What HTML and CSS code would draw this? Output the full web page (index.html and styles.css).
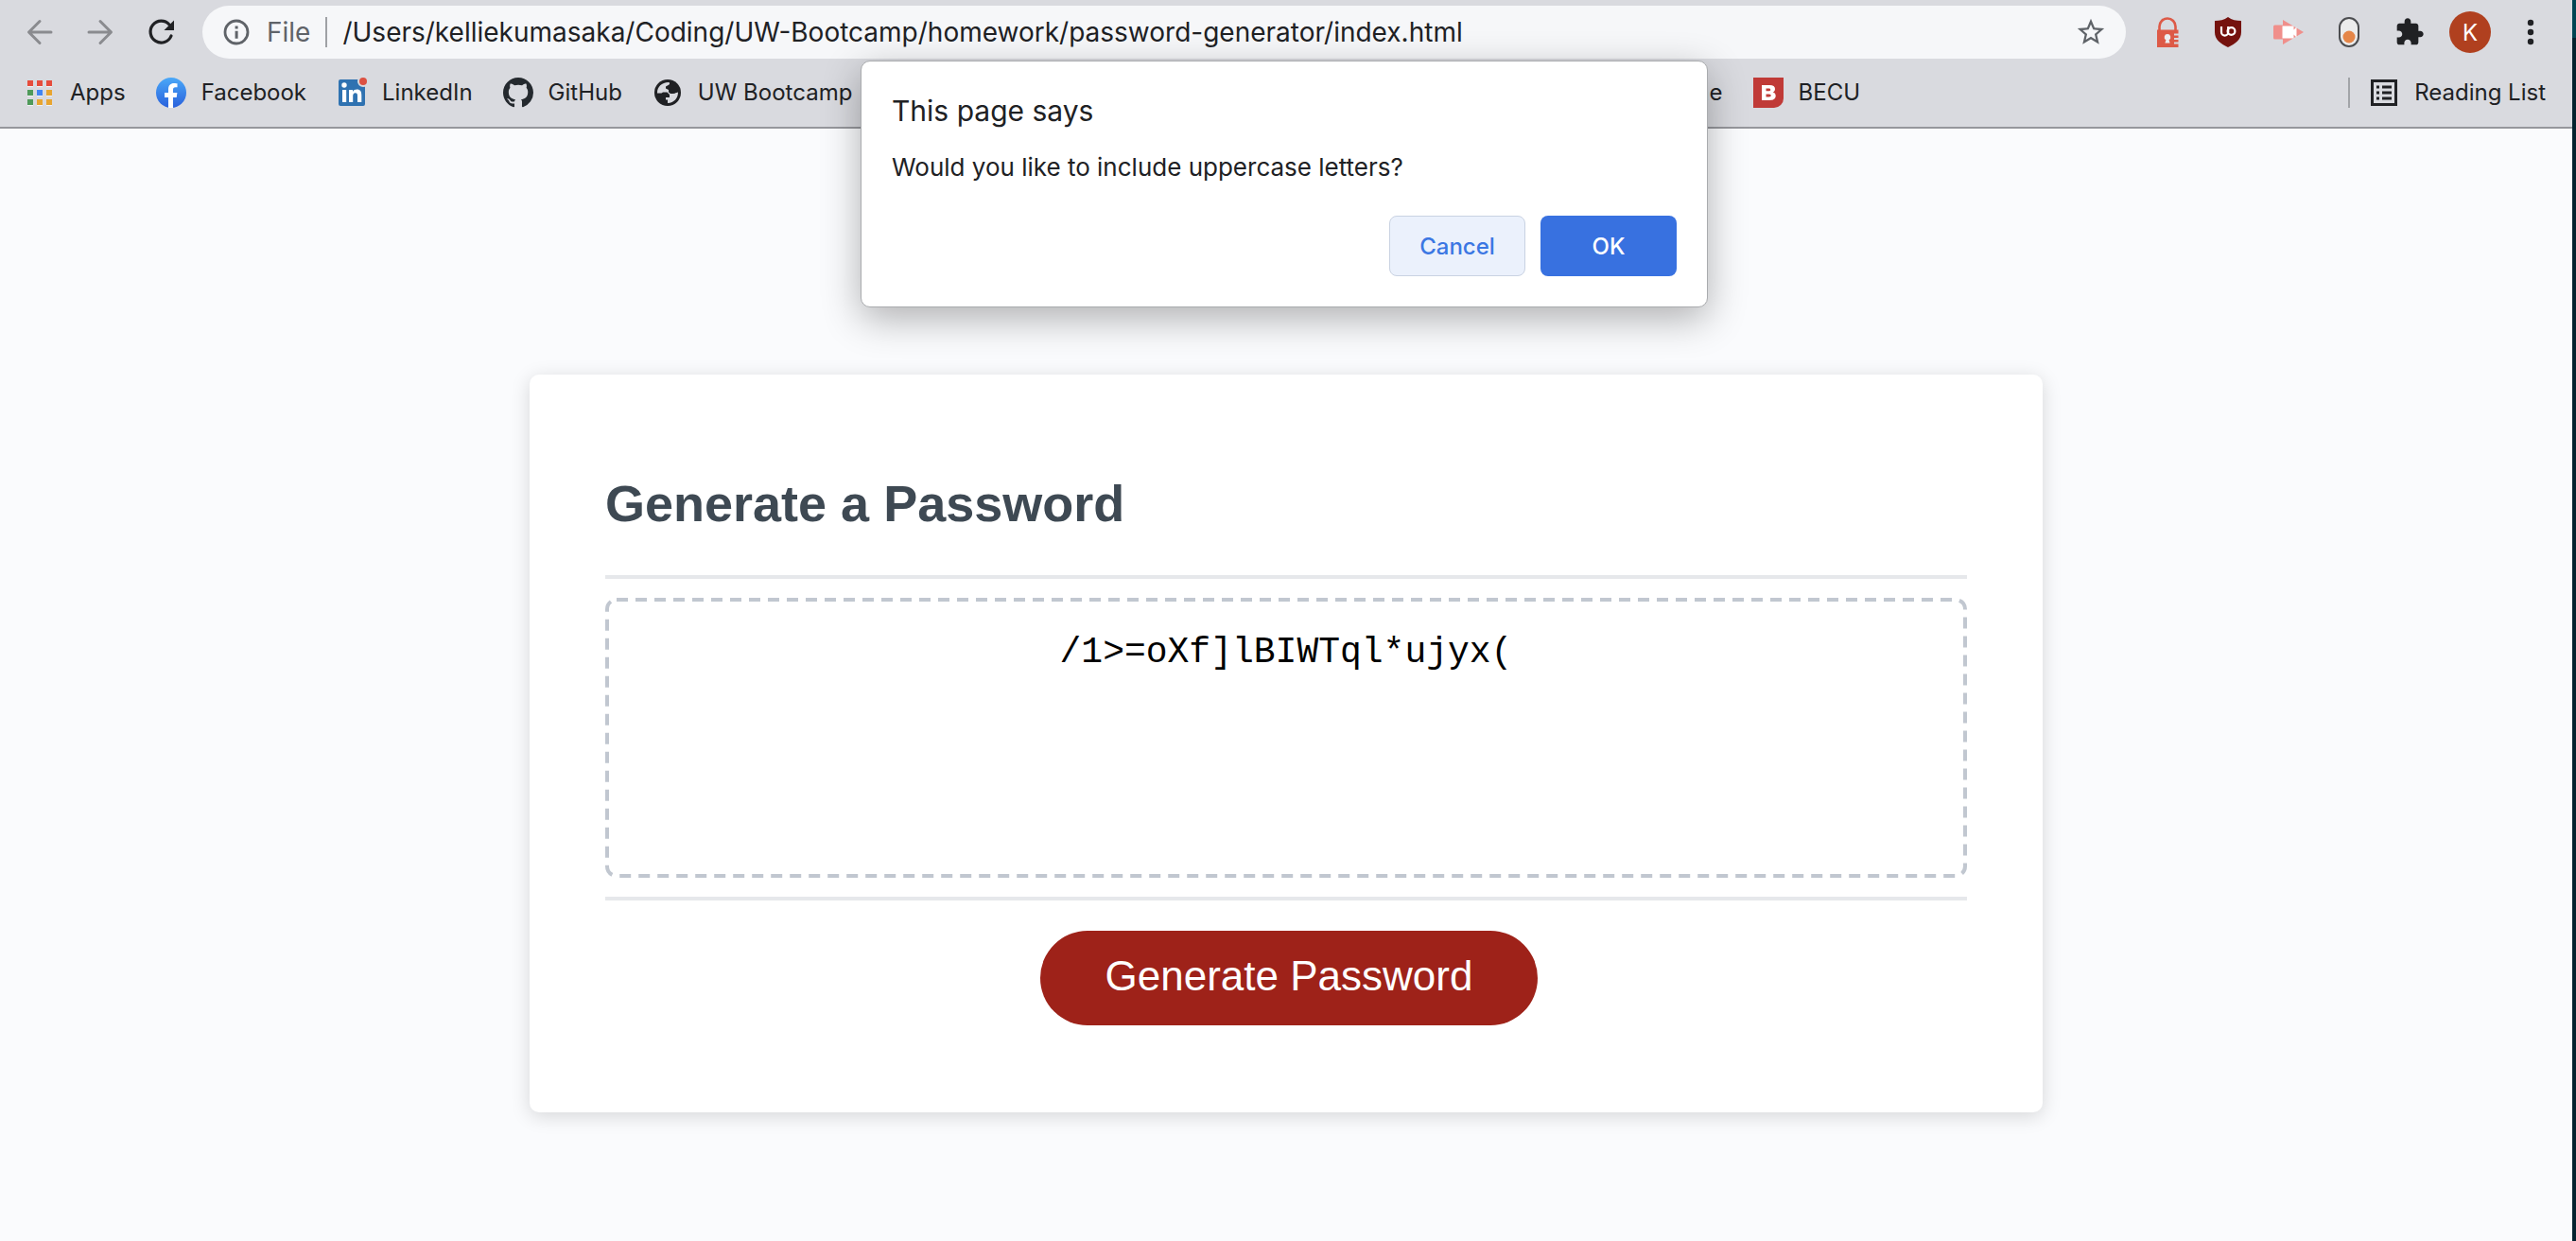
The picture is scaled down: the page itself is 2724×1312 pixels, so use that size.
FILE: index.html
```html
<!DOCTYPE html>
<html lang="en">
<head>
<meta charset="utf-8">
<title>Password Generator</title>
<link rel="stylesheet" href="styles.css">
</head>
<body>
<div class="window">
  <header class="browser">
    <div class="toolbar">
      <button class="tool tool-back" aria-label="Back"><svg width="32" height="32" viewBox="0 0 32 32" fill="none" stroke="#8a8b8f" stroke-width="3" stroke-linecap="round" stroke-linejoin="round"><path d="M28 16H5M16 4.500L4.500 16 16 27.500"/></svg></button>
      <button class="tool tool-forward" aria-label="Forward"><svg width="32" height="32" viewBox="0 0 32 32" fill="none" stroke="#8a8b8f" stroke-width="3" stroke-linecap="round" stroke-linejoin="round"><path d="M4 16h23M16 4.500L27.500 16 16 27.500"/></svg></button>
      <button class="tool tool-reload" aria-label="Reload"><svg width="32" height="32" viewBox="0 0 32 32"><path d="M27 20A11.400 11.400 0 1 1 25 8" fill="none" stroke="#202124" stroke-width="3.200" stroke-linecap="round"/><path d="M30 3.500V14H19.500z" fill="#202124"/></svg></button>
      <div class="address">
        <svg width="28" height="28" viewBox="0 0 28 28"><circle cx="14" cy="14" r="12" fill="none" stroke="#5f6368" stroke-width="2.800"/><path d="M12.600 7.500h3v3h-3zM12.600 12.800h3v8h-3z" fill="#5f6368"/></svg>
        <span class="scheme">File</span>
        <input class="url" type="text" aria-label="Address" value="/Users/kelliekumasaka/Coding/UW-Bootcamp/homework/password-generator/index.html">
        <button class="tool" aria-label="Bookmark this page"><svg width="34" height="34" viewBox="0 0 24 24" fill="#5f6368"><path d="M22 9.240l-7.190-.62L12 2 9.190 8.630 2 9.240l5.460 4.730L5.820 21 12 17.270 18.180 21l-1.630-7.030L22 9.240zM12 15.400l-3.760 2.270 1-4.280-3.320-2.880 4.380-.38L12 6.100l1.710 4.040 4.380.38-3.320 2.880 1 4.280L12 15.400z"/></svg></button>
      </div>
      <div class="extensions">
        <button class="tool" aria-label="Password manager"><svg width="32" height="32" viewBox="0 0 32 32"><path d="M7.500 14V10a8.500 8.500 0 0 1 17 0v4" fill="none" stroke="#dd5a47" stroke-width="2.600"/><path d="M5 13.500h22.500v4H23v2h4.500v2.500H23v2h4.500v2.500H23v2h4.500v3.500H5z" fill="#dd5a47"/><path d="M16 18a3.300 3.300 0 0 1 1.600 6.200l1 3.300h-5.200l1-3.300A3.300 3.300 0 0 1 16 18z" fill="#eceef0"/></svg></button>
        <button class="tool" aria-label="Ad blocker"><svg width="32" height="32" viewBox="0 0 32 32"><path d="M16 0c4 3 9 4 14 4v12c0 8-6 12-14 16C8 28 2 24 2 16V4c5 0 10-1 14-4z" fill="#75120e"/><path d="M9 10v6a3.600 3.600 0 0 0 7.200 0v-6" fill="none" stroke="#fff" stroke-width="2.200"/><circle cx="19.500" cy="15" r="3.900" fill="none" stroke="#fff" stroke-width="2.200"/></svg></button>
        <button class="tool" aria-label="Screen recorder"><svg width="32" height="32" viewBox="0 0 32 32"><path d="M0 10q0-1.500 1.500-1.500H10V3l22 13L10 29v-5.500H1.500Q0 23.500 0 22z" fill="#f08f8b"/><path d="M9.500 9.500h12v4l3-3v11l-3-3v4h-12z" fill="#fff"/></svg></button>
        <button class="tool" aria-label="Color toggle"><svg width="32" height="32" viewBox="0 0 32 32"><rect x="6" y="1" width="20" height="30" rx="10" fill="#ececec" stroke="#4c4d50" stroke-width="2"/><circle cx="16" cy="21" r="6.500" fill="#e58648"/></svg></button>
        <button class="tool" aria-label="Extensions"><svg width="32" height="32" viewBox="0 0 24 24" fill="#202124"><path d="M20.500 11H19V7c0-1.100-.9-2-2-2h-4V3.500C13 2.120 11.880 1 10.500 1S8 2.120 8 3.500V5H4c-1.100 0-1.990.9-1.990 2v3.800H3.500c1.490 0 2.700 1.210 2.700 2.700s-1.210 2.700-2.700 2.700H2V20c0 1.100.9 2 2 2h3.800v-1.500c0-1.490 1.210-2.700 2.700-2.700s2.700 1.210 2.700 2.700V22H17c1.100 0 2-.9 2-2v-4h1.500c1.380 0 2.500-1.120 2.500-2.500S21.880 11 20.500 11z"/></svg></button>
      </div>
      <button class="avatar" aria-label="Profile">K</button>
      <button class="tool" aria-label="Menu"><svg width="32" height="32" viewBox="0 0 32 32" fill="#202124"><circle cx="16" cy="6" r="3.200"/><circle cx="16" cy="16" r="3.200"/><circle cx="16" cy="26" r="3.200"/></svg></button>
    </div>
    <nav class="bookmarks" aria-label="Bookmarks">
      <a class="bookmark" href="#"><svg width="32" height="32" viewBox="0 0 32 32"><path d="M3 9h6v1H3zM13 9h6v1h-6zM23 9h6v1h-6zM3 19h6v1H3zM13 19h6v1h-6zM23 19h6v1h-6zM3 29h6v1H3zM13 29h6v1h-6zM23 29h6v1h-6z" fill="#f1f2f4"/><path d="M3 3h6v6H3zM13 3h6v6h-6zM23 3h6v6h-6z" fill="#e64c3c"/><path d="M3 13h6v6H3zM3 23h6v6H3z" fill="#4f9a5a"/><path d="M13 13h6v6h-6z" fill="#4285f4"/><path d="M23 13h6v6h-6zM13 23h6v6h-6zM23 23h6v6h-6z" fill="#e8a531"/></svg>Apps</a>
      <a class="bookmark" href="#"><svg width="32" height="32" viewBox="0 0 32 32"><defs><linearGradient id="fb" x1="0" y1="0" x2="0" y2="1"><stop offset="0" stop-color="#4aa8f8"/><stop offset="1" stop-color="#2a61dc"/></linearGradient></defs><circle cx="16" cy="16" r="16" fill="url(#fb)"/><path d="M13 32V21H9v-5h4v-3.500C13 8.300 15.300 6 19 6c1.800 0 3.500.3 3.500.3v4h-2c-2 0-2.500 1.200-2.500 2.400V16h4.400l-.7 5H18v11z" fill="#fff"/></svg>Facebook</a>
      <a class="bookmark" href="#"><svg width="32" height="32" viewBox="0 0 32 32"><rect x="2" y="2" width="28" height="28" rx="2" fill="#2f72b1"/><circle cx="8" cy="8" r="2.700" fill="#fff"/><path d="M6 13h4.200v13H6zM13 13h4v2c1-1.600 2.500-2.400 4.300-2.400 4 0 5 2.500 5 6.200V26H22v-6.500c0-2-.5-3.200-2.200-3.200-1.900 0-2.600 1.400-2.600 3.200V26H13z" fill="#fff"/><circle cx="28" cy="4" r="6" fill="#d9dadf"/><circle cx="28" cy="4" r="4" fill="#dc5142"/></svg>LinkedIn</a>
      <a class="bookmark" href="#"><svg width="32" height="32" viewBox="0 0 16 16" fill="#24292e"><path d="M8 0C3.580 0 0 3.580 0 8c0 3.540 2.290 6.530 5.470 7.590.4.070.55-.17.55-.38 0-.19-.01-.82-.01-1.490-2.010.37-2.530-.49-2.690-.94-.09-.23-.48-.94-.82-1.130-.28-.15-.68-.52-.01-.53.63-.01 1.080.58 1.230.82.72 1.210 1.870.87 2.330.66.070-.52.28-.87.51-1.070-1.780-.2-3.640-.89-3.640-3.950 0-.87.31-1.590.82-2.150-.08-.2-.36-1.020.08-2.120 0 0 .67-.21 2.200.82.64-.18 1.320-.27 2-.27s1.360.09 2 .27c1.530-1.040 2.200-.82 2.200-.82.44 1.100.16 1.920.08 2.120.51.56.82 1.270.82 2.150 0 3.070-1.870 3.750-3.650 3.950.29.25.54.73.54 1.480 0 1.070-.01 1.930-.01 2.200 0 .21.15.46.55.38A8.010 8.010 0 0 0 16 8c0-4.420-3.580-8-8-8z"/></svg>GitHub</a>
      <a class="bookmark" href="#"><svg width="32" height="32" viewBox="0 0 32 32"><circle cx="16" cy="16" r="14" fill="#202124"/><path d="M5 16C5 10 9.500 5 17 5c1.200 0 1.500 1.500.5 2.500L14 9.500v2l3 1.500v2.500l2 1.500h3l5-1.500C27 22 23 26.500 16 27v-3.500h-2V21h4v-3l-2.500-2.500H11l-1.500 1H5z" fill="#d9dadf"/><path d="M16.500 9.500l3-3 4 1 3 6-3 3-4-.5-1-3z" fill="#202124"/></svg>UW Bootcamp</a>
      <a class="bookmark bookmark-covered" href="#">ne</a>
      <a class="bookmark" href="#"><svg width="32" height="32" viewBox="0 0 32 32"><path d="M0 0h32v22a10 10 0 0 1-10 10H0z" fill="#c03a37"/><path fill-rule="evenodd" d="M9 8h8.500c3.500 0 5.500 1.500 5.500 4 0 1.700-.9 2.900-2.300 3.500 1.900.5 3 1.900 3 3.800 0 3-2.300 4.700-6 4.700H9zm4.500 3.500v2.800h3c2.400 0 2.400-2.800 0-2.800zm0 6v3h3.300c2.600 0 2.600-3 0-3z" fill="#fff"/></svg>BECU</a>
      <a class="bookmark reading-list" href="#"><svg width="32" height="32" viewBox="0 0 32 32" fill="#202124"><path d="M2 2h28v28H2zm3 3v22h22V5z" fill-rule="evenodd"/><path d="M8 8.500h3v3H8zM14 8.500h10v3H14zM8 14.500h3v3H8zM14 14.500h10v3H14zM8 20.500h3v3H8zM14 20.500h10v3H14z"/></svg>Reading List</a>
    </nav>
  </header>

  <main class="page">
    <section class="card">
      <h1 class="card-title">Generate a Password</h1>
      <div class="card-body">
        <div class="password-frame">
          <svg class="dashes" aria-hidden="true"><rect x="2" y="2" rx="10"/></svg>
          <textarea class="password" readonly aria-label="Your secure password">/1&gt;=oXf]lBIWTql*ujyx(</textarea>
        </div>
      </div>
      <div class="card-footer">
        <button class="generate">Generate Password</button>
      </div>
    </section>
  </main>

  <dialog class="prompt" open aria-labelledby="prompt-title">
    <h2 class="prompt-title" id="prompt-title">This page says</h2>
    <p class="prompt-text">Would you like to include uppercase letters?</p>
    <div class="prompt-actions">
      <button class="prompt-button prompt-cancel">Cancel</button>
      <button class="prompt-button prompt-ok">OK</button>
    </div>
  </dialog>
</div>
</body>
</html>
```
FILE: styles.css
```css
*, *::before, *::after {
  box-sizing: border-box;
}

body {
  margin: 0;
  padding-right: 4px;
  background: linear-gradient(#004452 40px, #04222e 40px);
  font-family: Inter, "Liberation Sans", sans-serif;
  color: #202124;
}

button {
  border: 0;
  padding: 0;
  background: none;
  font-family: inherit;
}

svg {
  display: block;
  flex: none;
}

.window {
  position: relative;
  display: flex;
  flex-direction: column;
  min-height: 100vh;
  background: #fafbfd;
}

/* Browser chrome */

.browser {
  background: #d9dadf;
  border-bottom: 2px solid #96979c;
}

.toolbar {
  display: flex;
  align-items: center;
  height: 68px;
  padding: 0 28px 0 26px;
}

.tool-back,
.tool-forward {
  margin-right: 32px;
}

.tool-reload {
  margin-right: 28px;
}

.address {
  flex: 1;
  display: flex;
  align-items: center;
  height: 56px;
  padding: 0 20px 0 22px;
  border-radius: 28px;
  background: #f6f7f9;
  font-size: 28px;
}

.scheme {
  margin-left: 18px;
  padding-right: 16px;
  border-right: 2px solid #9fa1a5;
  line-height: 32px;
  color: #5f6368;
}

.url {
  flex: 1;
  min-width: 0;
  padding: 0 0 0 16px;
  border: 0;
  background: none;
  font: inherit;
  color: inherit;
}

.extensions {
  display: flex;
  gap: 32px;
  margin: 0 26px 0 28px;
}

.avatar {
  width: 44px;
  height: 44px;
  margin-right: 26px;
  border-radius: 50%;
  background: #b0401f;
  font-size: 24px;
  color: #fff;
}

.bookmarks {
  display: flex;
  align-items: center;
  gap: 32px;
  height: 66px;
  padding: 0 28px 6px 26px;
}

.bookmark {
  display: flex;
  align-items: center;
  gap: 16px;
  font-size: 24px;
  line-height: 32px;
  color: inherit;
  text-decoration: none;
  white-space: nowrap;
}

.bookmark-covered {
  margin-left: 860px;
}

.reading-list {
  margin-left: auto;
  padding-left: 20px;
  border-left: 2px solid #a2a4a8;
}

/* Password generator */

.page {
  padding: 260px 32px 100px;
}

.card {
  max-width: 1600px;
  margin: 0 auto;
  padding: 100px 80px 92px;
  border-radius: 10px;
  background: #fff;
  box-shadow: 0 4px 20px rgba(0, 0, 0, 0.15);
  font-family: "Liberation Sans", Arial, sans-serif;
}

.card-title {
  margin: 0 0 40px;
  font-size: 54px;
  line-height: 72px;
  color: #3e4953;
}

.card-body {
  padding: 20px 0;
  border: solid #e6e8eb;
  border-width: 4px 0;
}

.password-frame {
  position: relative;
}

.dashes {
  position: absolute;
  inset: 0;
  width: 100%;
  height: 100%;
  pointer-events: none;
}

.dashes rect {
  width: calc(100% - 4px);
  height: calc(100% - 4px);
  fill: none;
  stroke: #c1c7d0;
  stroke-width: 4px;
  stroke-dasharray: 12px 8px;
}

.password {
  display: block;
  width: 100%;
  height: 296px;
  padding: 34px 24px;
  border: 0;
  background: none;
  resize: none;
  font-family: "Liberation Mono", "Courier New", monospace;
  font-size: 38px;
  line-height: 48px;
  text-align: center;
  color: #000;
}

.card-footer {
  padding: 32px 0 0 6px;
  text-align: center;
}

.generate {
  height: 100px;
  padding: 0 69px 4px;
  border-radius: 50px;
  background: #9e2219;
  font-size: 44px;
  font-family: inherit;
  color: #fff;
}

/* Confirmation prompt */

.prompt {
  position: absolute;
  top: 64px;
  right: 4px;
  width: 896px;
  margin: 0 auto;
  padding: 32px;
  border: 1px solid #a9abae;
  border-radius: 10px;
  background: #fff;
  color: inherit;
  box-shadow: 0 12px 40px rgba(0, 0, 0, 0.3);
}

.prompt-title {
  margin: 0 0 22px;
  font-size: 30px;
  font-weight: 400;
  line-height: 40px;
}

.prompt-text {
  margin: 0 0 33px;
  font-size: 26px;
  line-height: 36px;
}

.prompt-actions {
  display: flex;
  justify-content: flex-end;
  gap: 16px;
}

.prompt-button {
  width: 144px;
  height: 64px;
  border-radius: 8px;
  font-size: 24px;
  font-weight: 500;
}

.prompt-cancel {
  border: 1px solid #c9d2e2;
  background: #ebf1fc;
  color: #3b77e3;
}

.prompt-ok {
  background: #3871e0;
  color: #fff;
}
```
